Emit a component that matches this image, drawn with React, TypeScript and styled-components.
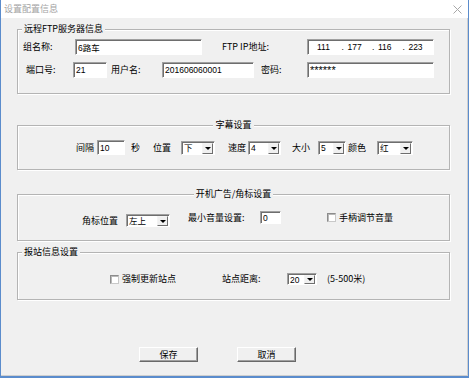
import React from "react";
import styled, { createGlobalStyle } from "styled-components";

const GlobalStyle = createGlobalStyle`
  html, body {
    margin: 0;
    padding: 0;
    background: #f0f0f0;
  }
  body {
    font-family: "Noto Sans CJK SC", "Liberation Sans", sans-serif;
    color: #000;
  }
`;

const Window = styled.div`
  width: 469px;
  height: 378px;
  box-sizing: border-box;
  display: flex;
  flex-direction: column;
  background: #f0f0f0;
  border-left: 1px solid #5b8ccc;
  border-right: 1px solid #5b8ccc;
  border-bottom: 2px solid #5b8ccc;
  overflow: hidden;
`;

const TitleBar = styled.div`
  height: 18px;
  flex: none;
  background: #fff;
  display: flex;
  align-items: center;
  justify-content: space-between;
  padding: 0 6px 0 3px;
`;

const Title = styled.span`
  font-size: 9px;
  line-height: 12px;
  color: #a3a3a3;
`;

const Body = styled.div`
  flex: 1;
  padding: 0 0 0 16px;
  border-right: 1px solid #cfcfcf;
  border-bottom: 1px solid #cfcfcf;
`;

const Group = styled.fieldset<{ $mt: number; $pt: number; $pb: number }>`
  width: 433px;
  box-sizing: border-box;
  min-inline-size: 0;
  margin: ${(p) => p.$mt}px 0 0 0;
  padding: ${(p) => p.$pt}px 0 ${(p) => p.$pb}px 0;
  border: 1px solid #b4b4b4;
  box-shadow: 1px 1px 0 #fff, inset 1px 1px 0 #fff;
`;

const Legend = styled.legend<{ $center?: boolean }>`
  font-size: 9px;
  line-height: 12px;
  padding: 0 2px;
  margin: ${(p) => (p.$center ? "0 auto" : "0 0 0 4px")};
  background: #f0f0f0;
`;

const Row = styled.div<{ $h: number; $mt?: number; $top?: boolean }>`
  display: flex;
  align-items: ${(p) => (p.$top ? "flex-start" : "center")};
  height: ${(p) => p.$h}px;
  margin-top: ${(p) => p.$mt ?? 0}px;
`;

const Cluster = styled.div<{ $ml: number; $mt: number; $h: number }>`
  display: flex;
  align-items: center;
  height: ${(p) => p.$h}px;
  margin-left: ${(p) => p.$ml}px;
  margin-top: ${(p) => p.$mt}px;
`;

const Label = styled.span<{ $w?: number; $ml?: number }>`
  flex: none;
  font-size: 9px;
  line-height: 12px;
  white-space: nowrap;
  width: ${(p) => (p.$w ? `${p.$w}px` : "auto")};
  margin-left: ${(p) => p.$ml ?? 0}px;
`;

const TextBox = styled.input<{ $w: number; $h: number; $ml?: number; $big?: boolean }>`
  flex: none;
  box-sizing: border-box;
  width: ${(p) => p.$w}px;
  height: ${(p) => p.$h}px;
  margin: 0 0 0 ${(p) => p.$ml ?? 0}px;
  padding: 0 0 0 2px;
  background: #fff;
  border: 1px solid;
  border-color: #a0a0a0 #fff #fff #a0a0a0;
  box-shadow: inset 1px 1px 0 #6e6e6e;
  font-family: "Liberation Sans", "Noto Sans CJK SC", sans-serif;
  font-size: ${(p) => (p.$big ? "11px" : "8.5px")};
  color: #000;
  outline: none;
`;

const IpBox = styled.div`
  flex: none;
  box-sizing: border-box;
  width: 127px;
  height: 16px;
  display: flex;
  align-items: center;
  padding-left: 9px;
  background: #fff;
  border: 1px solid;
  border-color: #a0a0a0 #fff #fff #a0a0a0;
  box-shadow: inset 1px 1px 0 #6e6e6e;
  font-family: "Liberation Sans", sans-serif;
  font-size: 8.5px;
`;

const Octet = styled.span`
  width: 25px;
`;

const Dot = styled.span`
  width: 6px;
`;

const Combo = styled.div<{ $w: number; $h: number; $ml?: number }>`
  flex: none;
  box-sizing: border-box;
  width: ${(p) => p.$w}px;
  height: ${(p) => p.$h}px;
  margin-left: ${(p) => p.$ml ?? 0}px;
  display: flex;
  align-items: stretch;
  background: #fff;
  border: 1px solid;
  border-color: #a0a0a0 #fff #fff #a0a0a0;
  box-shadow: inset 1px 1px 0 #6e6e6e;
  padding: 1px 1px 0 1px;
`;

const ComboText = styled.span`
  flex: 1;
  padding-left: 1px;
  font-family: "Liberation Sans", "Noto Sans CJK SC", sans-serif;
  font-size: 8.5px;
  line-height: 11px;
`;

const ComboButton = styled.span`
  flex: none;
  width: 11px;
  box-sizing: border-box;
  background: #f0f0f0;
  border: 1px solid;
  border-color: #f4f4f4 #6e6e6e #6e6e6e #f4f4f4;
  display: flex;
  align-items: center;
  justify-content: center;

  &::after {
    content: "";
    border-left: 3px solid transparent;
    border-right: 3px solid transparent;
    border-top: 3px solid #000;
  }
`;

const Check = styled.span<{ $ml?: number }>`
  flex: none;
  width: 9px;
  height: 9px;
  box-sizing: border-box;
  margin-left: ${(p) => p.$ml ?? 0}px;
  background: #fff;
  border: 1px solid;
  border-color: #8c8c8c #c8c8c8 #c8c8c8 #8c8c8c;
  box-shadow: inset 1px 1px 0 #b8b8b8;
`;

const ButtonRow = styled.div`
  display: flex;
  gap: 39px;
  margin-top: 47px;
  padding-left: 122px;
`;

const Button = styled.button`
  width: 59px;
  height: 15px;
  box-sizing: border-box;
  padding: 0;
  background: #f0f0f0;
  border: 1px solid;
  border-color: #fff #696969 #696969 #fff;
  box-shadow: inset -1px -1px 0 #a0a0a0;
  font-family: "Noto Sans CJK SC", sans-serif;
  font-size: 9px;
  line-height: 12px;
  color: #000;
`;

function Select({ value, w, h, ml }: { value: string; w: number; h: number; ml?: number }) {
  return (
    <Combo $w={w} $h={h} $ml={ml}>
      <ComboText>{value}</ComboText>
      <ComboButton />
    </Combo>
  );
}

export default function App() {
  return (
    <>
      <GlobalStyle />
      <Window>
        <TitleBar>
          <Title>设置配置信息</Title>
          <svg width="9" height="9" viewBox="0 0 9 9">
            <path d="M0.5 0.5 L8.5 8.5 M8.5 0.5 L0.5 8.5" stroke="#a8a8a8" strokeWidth="1" />
          </svg>
        </TitleBar>
        <Body>
          <Group $mt={5} $pt={4} $pb={15}>
            <Legend>远程FTP服务器信息</Legend>
            <Row $h={16}>
              <Label $ml={5} $w={52}>组名称:</Label>
              <TextBox $w={127} $h={16} defaultValue="6路车" readOnly />
              <Label $ml={20} $w={85}>FTP IP地址:</Label>
              <IpBox>
                <Octet>111</Octet>
                <Dot>.</Dot>
                <Octet>177</Octet>
                <Dot>.</Dot>
                <Octet>116</Octet>
                <Dot>.</Dot>
                <Octet>223</Octet>
              </IpBox>
            </Row>
            <Row $h={16} $mt={7}>
              <Label $ml={8} $w={47}>端口号:</Label>
              <TextBox $w={34} $h={16} defaultValue="21" readOnly />
              <Label $ml={4} $w={51}>用户名:</Label>
              <TextBox $w={92} $h={16} defaultValue="201606060001" readOnly />
              <Label $ml={7} $w={46}>密码:</Label>
              <TextBox $w={127} $h={16} $big defaultValue="******" readOnly />
            </Row>
          </Group>

          <Group $mt={25} $pt={9} $pb={14}>
            <Legend $center>字幕设置</Legend>
            <Row $h={15}>
              <Label $ml={58} $w={21}>间隔</Label>
              <TextBox $w={28} $h={15} defaultValue="10" readOnly />
              <Label $ml={6} $w={22}>秒</Label>
              <Label $w={28}>位置</Label>
              <Select value="下" w={34} h={14} />
              <Label $ml={13} $w={20}>速度</Label>
              <Select value="4" w={33} h={14} />
              <Label $ml={11} $w={26}>大小</Label>
              <Select value="5" w={28} h={14} />
              <Label $ml={2} $w={29}>颜色</Label>
              <Select value="红" w={36} h={14} />
            </Row>
          </Group>

          <Group $mt={18} $pt={11} $pb={13}>
            <Legend $center>开机广告/角标设置</Legend>
            <Row $h={16} $top>
              <Cluster $ml={64} $mt={3} $h={13}>
                <Label $w={44}>角标位置</Label>
                <Select value="左上" w={44} h={13} />
              </Cluster>
              <Cluster $ml={18} $mt={0} $h={13}>
                <Label $w={72}>最小音量设置:</Label>
                <TextBox $w={21} $h={13} defaultValue="0" readOnly />
                <Check $ml={46} />
                <Label $ml={3}>手柄调节音量</Label>
              </Cluster>
            </Row>
          </Group>

          <Group $mt={5} $pt={15} $pb={14}>
            <Legend>报站信息设置</Legend>
            <Row $h={12}>
              <Check $ml={92} />
              <Label $ml={3} $w={100}>强制更新站点</Label>
              <Label $w={65}>站点距离:</Label>
              <Select value="20" w={30} h={12} />
              <Label $ml={10}>(5-500米)</Label>
            </Row>
          </Group>

          <ButtonRow>
            <Button>保存</Button>
            <Button>取消</Button>
          </ButtonRow>
        </Body>
      </Window>
    </>
  );
}
